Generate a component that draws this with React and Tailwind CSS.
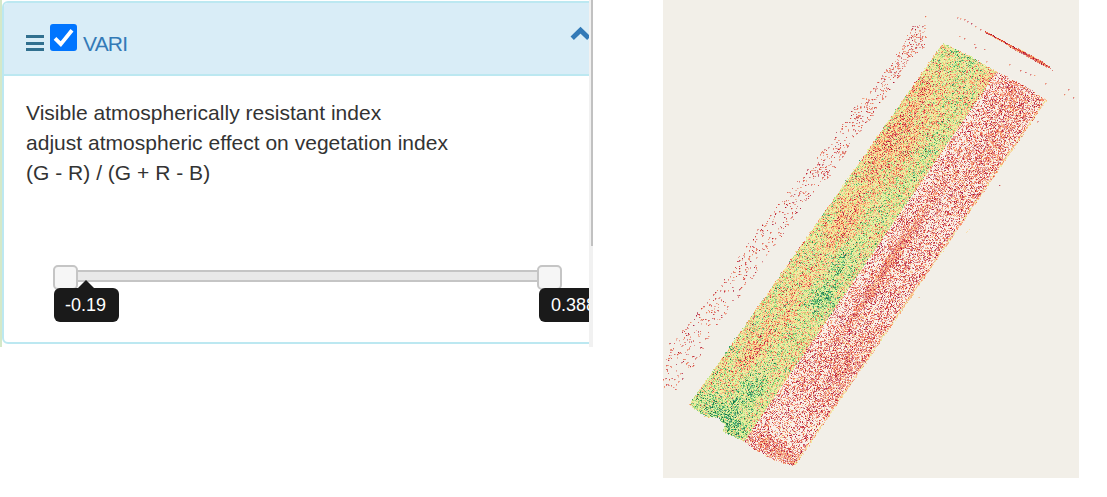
import React, { useMemo } from "react";

const MAP_X = 663;
const RAMP = [
  [165, 0, 38], [215, 48, 39], [244, 109, 67], [250, 168, 97], [252, 216, 132],
  [238, 236, 145], [217, 239, 139], [166, 217, 106], [102, 189, 99], [26, 152, 80], [0, 104, 55],
];
const GROUND = [246, 239, 234];

// [x, y, sigma along rows, sigma across rows, index offset]
const CROP_PATCHES = [
  [888, 140, 28, 7, -0.2], [925, 88, 14, 10, -0.14], [905, 148, 25, 8, -0.14],
  [750, 358, 26, 6, -0.17], [860, 200, 24, 6, -0.08], [800, 300, 35, 8, -0.07],
  [830, 245, 30, 7, -0.1], [842, 222, 20, 7, -0.08], [985, 80, 18, 5, -0.12],
  [840, 261, 13, 12, 0.19], [821, 297, 12, 10, 0.24], [750, 386, 13, 13, 0.2],
  [732, 428, 12, 16, 0.21], [703, 404, 12, 15, 0.14], [967, 61, 14, 14, 0.08],
  [920, 165, 25, 4, 0.1], [885, 208, 18, 10, 0.05], [780, 350, 50, 8, 0.06],
  [725, 405, 16, 18, 0.09], [951, 118, 18, 6, 0.03],
];
// [x, y, sigma along rows, sigma across rows, coverage offset]
const SOIL_PATCHES = [
  [910, 232, 38, 3.5, 0.45], [865, 300, 34, 3, 0.35], [885, 265, 30, 3, 0.25],
  [985, 155, 30, 12, 0.22], [1008, 98, 16, 14, 0.16], [775, 449, 6, 26, 0.45],
  [850, 360, 30, 8, 0.22], [835, 385, 30, 8, 0.15], [808, 378, 25, 7, 0.15],
  [940, 133, 32, 7, -0.2], [910, 180, 30, 8, -0.2], [780, 412, 20, 10, -0.12],
  [800, 425, 16, 16, -0.12], [975, 105, 20, 5, -0.2], [850, 285, 28, 6, -0.12],
];
const OUTLINE = [
  [943, 43], [970, 56], [995, 71], [1022, 84], [1047, 100], [795, 466], [778, 462],
  [758, 452], [742, 441], [722, 431], [725, 425], [717, 417], [708, 418], [689, 405],
];
// [y, left, right, density]
const SCATTER = [
  [25, 911, 925, 0.24], [45, 903, 926, 0.26], [60, 892, 909, 0.28], [80, 879, 897, 0.24], [100, 860, 883, 0.2],
  [120, 842, 869, 0.16], [140, 832, 852, 0.21], [160, 814, 841, 0.15], [180, 798, 826, 0.15],
  [200, 780, 807, 0.12], [220, 764, 793, 0.12], [240, 749, 779, 0.1], [260, 736, 765, 0.1],
  [280, 723, 750, 0.09], [300, 708, 736, 0.12], [320, 690, 721, 0.1], [340, 668, 707, 0.09],
  [360, 663, 699, 0.07], [390, 663, 676, 0.06],
];
const STRAY = [
  [925, 16], [957, 17], [960, 18], [964, 19], [967, 21], [971, 23], [975, 26], [980, 29], [959, 36],
  [964, 38], [974, 44], [975, 47], [984, 49], [986, 61], [1009, 64], [1020, 70], [1025, 72],
  [1030, 74], [1034, 75], [1045, 83], [1068, 89], [1073, 97], [1064, 94], [999, 185], [1037, 121],
  [918, 297],
];

function inside(x, y) {
  let hit = false;
  for (let i = 0, j = OUTLINE.length - 1; i < OUTLINE.length; j = i++) {
    const [ax, ay] = OUTLINE[i];
    const [bx, by] = OUTLINE[j];
    if (ay > y !== by > y && x < ((bx - ax) * (y - ay)) / (by - ay) + ax) hit = !hit;
  }
  return hit;
}

function patches(list, x, y) {
  let sum = 0;
  for (const [cx, cy, sa, sc, amount] of list) {
    const dx = x - cx;
    const dy = y - cy;
    const along = (-0.567 * dx + 0.824 * dy) / sa;
    const across = (0.824 * dx + 0.567 * dy) / sc;
    const d = along * along + across * across;
    if (d < 9) sum += amount * Math.exp(-d / 2);
  }
  return sum;
}

function cellNoise(i, j) {
  let h = (Math.imul(i, 374761393) + Math.imul(j, 668265263)) | 0;
  h = Math.imul(h ^ (h >>> 13), 1274126177);
  return ((h ^ (h >>> 16)) >>> 0) / 4294967296;
}

function buildRaster() {
  let seed = 90421;
  const rnd = () => {
    seed = (Math.imul(seed, 1664525) + 1013904223) >>> 0;
    return seed / 4294967296;
  };
  const layers = new Map();
  const put = (x, y, color, alpha, base) => {
    const c = color.map((v, i) => Math.min(255, Math.round((v * alpha + base[i] * (1 - alpha)) / 8) * 8));
    const key = `rgb(${c.join(",")})`;
    if (!layers.has(key)) layers.set(key, []);
    layers.get(key).push(`M${x - MAP_X} ${y}h1v1h-1z`);
  };
  const ramp = (value) => RAMP[Math.max(0, Math.min(10, Math.round(value * 10)))];

  for (let y = 42; y < 468; y++) {
    for (let x = 686; x < 1050; x++) {
      const jx = x + 0.5 + (rnd() - 0.5) * 1.6;
      const jy = y + 0.5 + (rnd() - 0.5) * 1.6;
      if (!inside(jx, jy)) continue;
      const noise = rnd() + rnd() + rnd() - 1.5;
      const across = 0.824 * x + 0.567 * y;
      const along = -0.567 * x + 0.824 * y;
      const streak = cellNoise(Math.floor(across / 1.6), Math.floor(along / 13)) - 0.5;
      const split = 995 - ((y - 73) * 252) / 369;
      const edge = 1047 - ((y - 100) * 252) / 366;
      if (x < split) {
        const value = 0.49 + patches(CROP_PATCHES, x, y) + streak * 0.14 + noise * 0.38;
        put(x, y, ramp(value), 0.62 + rnd() * 0.33, GROUND);
      } else {
        const rim = edge - x < 3;
        const density = patches(SOIL_PATCHES, x, y);
        const cover = 0.52 + density + streak * 0.3 + (rim ? 0.5 : 0);
        if (rnd() < cover) {
          const value = (rim ? 0.33 : 0.12) + Math.max(0, density) * 0.1 + noise * 0.25;
          put(x, y, ramp(value), 0.3 + rnd() * 0.62, GROUND);
        } else {
          put(x, y, GROUND, 1, GROUND);
        }
      }
    }
  }
  const paper = [242, 239, 232];
  for (let k = 0; k < SCATTER.length - 1; k++) {
    const [y0, l0, r0, d0] = SCATTER[k];
    const [y1, l1, r1] = SCATTER[k + 1];
    for (let y = y0; y < y1; y++) {
      const t = (y - y0) / (y1 - y0);
      const left = Math.round(l0 + (l1 - l0) * t);
      const right = Math.round(r0 + (r1 - r0) * t);
      for (let x = left; x < right; x++) {
        if (rnd() < d0 * 0.62) {
          put(x, y, ramp(rnd() * 0.22), 0.4 + rnd() * 0.5, paper);
          if (rnd() < 0.5) put(x + 1, y, ramp(rnd() * 0.25), 0.2 + rnd() * 0.4, paper);
          if (rnd() < 0.4) put(x, y + 1, ramp(rnd() * 0.25), 0.2 + rnd() * 0.4, paper);
        }
      }
    }
  }
  for (let x = 985; x < 1050; x++) {
    const y = Math.round(31 + (x - 985) * 0.55);
    put(x, y, ramp(rnd() * 0.25), 0.8 + rnd() * 0.2, paper);
    put(x, y + 1, ramp(rnd() * 0.3), 0.65 + rnd() * 0.3, paper);
    if (x > 1008 && x < 1047) put(x, y + 2, ramp(rnd() * 0.4), 0.5 + rnd() * 0.4, paper);
    if (x > 1017 && x < 1044) put(x, y - 1, ramp(rnd() * 0.4), 0.5 + rnd() * 0.35, paper);
  }
  put(1050, 68, ramp(0.1), 0.6, paper);
  put(1052, 70, ramp(0.1), 0.6, paper);
  for (const [x, y] of STRAY) {
    put(x, y, ramp(rnd() * 0.25), 0.45 + rnd() * 0.25, paper);
    put(x + 1, y, ramp(rnd() * 0.3), 0.35, paper);
    if (rnd() < 0.5) put(x, y + 1, ramp(rnd() * 0.3), 0.35, paper);
  }
  for (const [x, y] of [[967, 231], [969, 229], [918, 297], [966, 232]]) put(x, y, RAMP[4], 0.6, paper);
  return [...layers.entries()];
}

function FieldMap() {
  const layers = useMemo(buildRaster, []);
  return (
    <div className="h-[478px] w-[416px] shrink-0 overflow-hidden bg-[#f2efe8]">
      <svg width="416" height="478" viewBox="0 0 416 478" shapeRendering="crispEdges" className="block">
        {layers.map(([color, cells]) => (
          <path key={color} fill={color} d={cells.join("")} />
        ))}
      </svg>
    </div>
  );
}

function Handle({ children, placement }) {
  return (
    <div className={`absolute -top-[5px] h-[25px] w-[25px] rounded-[5px] border-2 border-[#c5c5c5] bg-[#f6f6f6] ${placement}`}>
      {children}
    </div>
  );
}

function IndexPanel() {
  return (
    <section className="flex h-[347px] w-[593px] shrink-0 overflow-hidden">
      <div className="w-[2px] shrink-0 bg-[#d5e8c8]" />
      <div className="w-[587px] shrink-0 overflow-hidden pt-px">
        <div className="h-[343px] w-[620px] overflow-hidden rounded-[6px] border-2 border-[#bce8f1] bg-white">
          <header className="flex h-[73px] items-start border-b-2 border-[#bce8f1] bg-[#d9edf7] pl-[22px]">
            <div className="mt-[32px] flex w-[18px] flex-col gap-[3.5px]">
              <span className="h-[3px] bg-[#31708f]" />
              <span className="h-[3px] bg-[#31708f]" />
              <span className="h-[3px] bg-[#31708f]" />
            </div>
            <div className="mt-[21px] ml-[6px] h-[27px] w-[27px] rounded-[3px] bg-[#0075ff]">
              <svg width="27" height="27" viewBox="0 0 27 27" className="block">
                <path d="M5 14.3L10.8 20.2L22 6.2" fill="none" stroke="#fff" strokeWidth="3.8" />
              </svg>
            </div>
            <span className="mt-[26px] ml-[6px] w-[45px] text-[21px] leading-[30px] tracking-[-0.8px] whitespace-nowrap text-[#337ab7]">VARI</span>
            <svg width="21" height="15" viewBox="0 0 21 15" className="mt-[23px] ml-[442px] block shrink-0">
              <path d="M2.2 12.2L10.5 4.2L18.8 12.2" fill="none" stroke="#337ab7" strokeWidth="4.8" />
            </svg>
          </header>
          <div className="px-[22px] pt-[22px]">
            <p className="text-[21px] leading-[30px] tracking-[0.02px] whitespace-nowrap text-[#333333]">
              Visible atmospherically resistant index
              <br />
              adjust atmospheric effect on vegetation index
              <br />
              (G - R) / (G + R - B)
            </p>
            <div className="relative mt-[82px] ml-[28px] h-[12px] w-[506px] rounded-[4px] border-2 border-[#c5c5c5] bg-[#e9e9e9]">
              <Handle placement="-left-[3px] -mt-[2px]">
                <div className="absolute top-[21px] -left-px flex h-[34px] w-[65px] items-center rounded-[6px] bg-[#1a1a1a] pl-[11px] text-[18px] text-white">
                  -0.19
                  <svg width="16" height="8" viewBox="0 0 16 8" className="absolute -top-[8px] left-[24px]">
                    <path d="M0 8L8 0L16 8Z" fill="#1a1a1a" />
                  </svg>
                </div>
              </Handle>
              <Handle placement="left-[481px] -mt-[2px]">
                <div className="absolute top-[21px] left-0 flex h-[34px] w-[69px] items-center rounded-[6px] bg-[#1a1a1a] pl-[12px] text-[18px] text-white">
                  0.388
                </div>
              </Handle>
            </div>
          </div>
        </div>
      </div>
      <div className="flex w-[4px] shrink-0 justify-end bg-[#f1f1f1]">
        <div className="h-[246px] w-[2px] bg-[#c1c1c1]" />
      </div>
    </section>
  );
}

export default function App() {
  return (
    <main className="flex h-[497px] w-[1107px] items-start gap-[70px] overflow-hidden bg-white font-['Liberation_Sans',Arial,sans-serif]">
      <IndexPanel />
      <FieldMap />
    </main>
  );
}
